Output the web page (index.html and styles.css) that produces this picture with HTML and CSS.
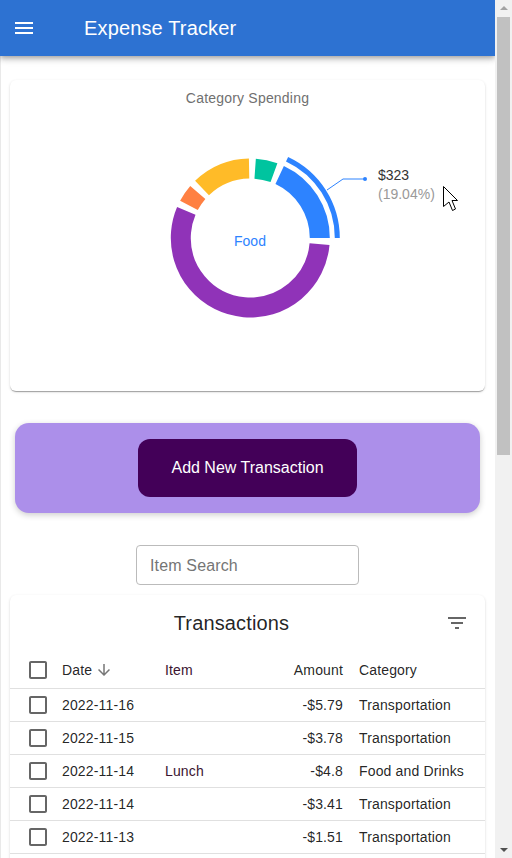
FILE: index.html
```html
<!DOCTYPE html>
<html lang="en">
<head>
    <meta charset="UTF-8">
    <meta name="viewport" content="width=device-width, initial-scale=1.0">
    <title>Expense Tracker</title>
    <link rel="stylesheet" href="styles.css">
</head>
<body>
<div class="window">
    <div class="page">
        <header class="appbar">
            <svg class="icon-menu" viewBox="0 0 24 24"><path d="M3 18h18v-2H3v2zm0-5h18v-2H3v2zm0-7v2h18V6H3z"/></svg>
            <h1>Expense Tracker</h1>
        </header>

        <main class="content">
            <section class="card chart-card">
                <h2>Category Spending</h2>
                <svg class="chart" viewBox="10 108 475 283">
                    <g fill="none" stroke-width="20">
                        <circle class="seg-food" cx="250.3" cy="238" r="69.5" pathLength="360" stroke-dasharray="65 295" transform="rotate(-65 250.3 238)"/>
                        <circle class="seg-green" cx="250.3" cy="238" r="69.5" pathLength="360" stroke-dasharray="16 344" transform="rotate(-86 250.3 238)"/>
                        <circle class="seg-yellow" cx="250.3" cy="238" r="69.5" pathLength="360" stroke-dasharray="43 317" transform="rotate(-134 250.3 238)"/>
                        <circle class="seg-orange" cx="250.3" cy="238" r="69.5" pathLength="360" stroke-dasharray="13 347" transform="rotate(-152 250.3 238)"/>
                        <circle class="seg-purple" cx="250.3" cy="238" r="69.5" pathLength="360" stroke-dasharray="198 162" transform="rotate(-355 250.3 238)"/>
                        <circle class="seg-food" cx="250.3" cy="238" r="87" stroke-width="5" pathLength="360" stroke-dasharray="65 295" transform="rotate(-65 250.3 238)"/>
                    </g>
                    <path class="leader" d="M327 190L343 179H365"/>
                    <circle class="leader-dot" cx="365" cy="179" r="2"/>
                    <text class="label-center" x="250" y="246">Food</text>
                    <text class="label-value" x="378" y="180">$323</text>
                    <text class="label-pct" x="378" y="199">(19.04%)</text>
                </svg>
            </section>

            <div class="add-panel">
                <button class="add-btn" type="button">Add New Transaction</button>
            </div>

            <div class="search-row">
                <input class="search" type="text" placeholder="Item Search">
            </div>

            <section class="card table-card">
                <div class="table-title">
                    <h2>Transactions</h2>
                    <svg class="icon-filter" viewBox="0 0 24 24"><path d="M10 18h4v-2h-4v2zM3 6v2h18V6H3zm3 7h12v-2H6v2z"/></svg>
                </div>
                <table>
                    <colgroup>
                        <col class="col-check"><col class="col-date"><col class="col-item"><col class="col-amount"><col class="col-cat">
                    </colgroup>
                    <thead>
                        <tr>
                            <th><svg class="check" viewBox="0 0 24 24"><path d="M19 5v14H5V5h14m0-2H5c-1.1 0-2 .9-2 2v14c0 1.1.9 2 2 2h14c1.1 0 2-.9 2-2V5c0-1.1-.9-2-2-2z"/></svg></th>
                            <th><span class="sort">Date <svg class="icon-sort" viewBox="0 0 24 24"><path d="M20 12l-1.41-1.41L13 16.17V4h-2v12.17l-5.58-5.59L4 12l8 8 8-8z"/></svg></span></th>
                            <th class="item">Item</th>
                            <th class="num">Amount</th>
                            <th>Category</th>
                        </tr>
                    </thead>
                    <tbody>
                        <tr>
                            <td><svg class="check" viewBox="0 0 24 24"><path d="M19 5v14H5V5h14m0-2H5c-1.1 0-2 .9-2 2v14c0 1.1.9 2 2 2h14c1.1 0 2-.9 2-2V5c0-1.1-.9-2-2-2z"/></svg></td>
                            <td>2022-11-16</td><td class="item"></td><td class="num">-$5.79</td><td>Transportation</td>
                        </tr>
                        <tr>
                            <td><svg class="check" viewBox="0 0 24 24"><path d="M19 5v14H5V5h14m0-2H5c-1.1 0-2 .9-2 2v14c0 1.1.9 2 2 2h14c1.1 0 2-.9 2-2V5c0-1.1-.9-2-2-2z"/></svg></td>
                            <td>2022-11-15</td><td class="item"></td><td class="num">-$3.78</td><td>Transportation</td>
                        </tr>
                        <tr>
                            <td><svg class="check" viewBox="0 0 24 24"><path d="M19 5v14H5V5h14m0-2H5c-1.1 0-2 .9-2 2v14c0 1.1.9 2 2 2h14c1.1 0 2-.9 2-2V5c0-1.1-.9-2-2-2z"/></svg></td>
                            <td>2022-11-14</td><td class="item">Lunch</td><td class="num">-$4.8</td><td>Food and Drinks</td>
                        </tr>
                        <tr>
                            <td><svg class="check" viewBox="0 0 24 24"><path d="M19 5v14H5V5h14m0-2H5c-1.1 0-2 .9-2 2v14c0 1.1.9 2 2 2h14c1.1 0 2-.9 2-2V5c0-1.1-.9-2-2-2z"/></svg></td>
                            <td>2022-11-14</td><td class="item"></td><td class="num">-$3.41</td><td>Transportation</td>
                        </tr>
                        <tr>
                            <td><svg class="check" viewBox="0 0 24 24"><path d="M19 5v14H5V5h14m0-2H5c-1.1 0-2 .9-2 2v14c0 1.1.9 2 2 2h14c1.1 0 2-.9 2-2V5c0-1.1-.9-2-2-2z"/></svg></td>
                            <td>2022-11-13</td><td class="item"></td><td class="num">-$1.51</td><td>Transportation</td>
                        </tr>
                    </tbody>
                </table>
            </section>
        </main>
    </div>

    <div class="scrollbar">
        <span class="arrow-up"></span>
        <div class="thumb"></div>
        <span class="arrow-down"></span>
    </div>
</div>

<!-- mouse pointer caught in the screenshot -->
<svg class="pointer" viewBox="0 0 18 28"><path d="M1.5 1.5L15.5 15.5H10L13.5 24L10.5 25.5L7 17L1.5 21.5Z"/></svg>
</body>
</html>
```

FILE: styles.css
```css
* {
    box-sizing: border-box;
}

html, body {
    margin: 0;
    height: 858px;
    overflow: hidden;
}

body {
    font-family: "Liberation Sans", Arial, sans-serif;
    color: rgba(0, 0, 0, .87);
    background: #fff;
}

.window {
    display: flex;
    height: 858px;
}

.page {
    width: 495px;
    height: 858px;
    overflow: hidden;
}

/* top bar */
.appbar {
    display: flex;
    align-items: center;
    height: 56px;
    padding-left: 12px;
    background: #2d72d2;
    color: #fff;
    box-shadow: 0 2px 4px -1px rgba(0, 0, 0, .2), 0 4px 5px 0 rgba(0, 0, 0, .14), 0 1px 10px 0 rgba(0, 0, 0, .12);
    position: relative;
}

.appbar h1 {
    margin: 0 0 0 48px;
    font-size: 20px;
    font-weight: 400;
    letter-spacing: .15px;
}

.icon-menu {
    width: 24px;
    height: 24px;
    fill: #fff;
}

.content {
    height: 802px;
    padding: 24px 10px 0 9px;
    border-left: 1px solid #e9e9e9;
}

.card {
    background: #fff;
    border-radius: 6px;
    box-shadow: 0 2px 1px -1px rgba(0, 0, 0, .2), 0 1px 1px 0 rgba(0, 0, 0, .14), 0 1px 3px 0 rgba(0, 0, 0, .12);
}

/* chart */
.chart-card {
    height: 311px;
    padding-top: 8px;
}

.chart-card h2 {
    margin: 0;
    height: 20px;
    line-height: 20px;
    font-size: 14px;
    font-weight: 400;
    text-align: center;
    letter-spacing: .2px;
    color: #707070;
}

.chart {
    display: block;
    width: 475px;
    height: 283px;
}

.seg-food { stroke: #2d83ff; }
.seg-green { stroke: #00c49f; }
.seg-yellow { stroke: #ffbb28; }
.seg-orange { stroke: #ff8042; }
.seg-purple { stroke: #9033b8; }

.leader {
    fill: none;
    stroke: #2d83ff;
}

.leader-dot {
    fill: #2d83ff;
}

.chart text {
    font-size: 14px;
}

.label-center {
    fill: #2d83ff;
    text-anchor: middle;
}

.label-value {
    fill: #333;
}

.label-pct {
    fill: #999;
}

/* add button */
.add-panel {
    display: flex;
    justify-content: center;
    align-items: center;
    height: 90px;
    margin: 32px 5px 0;
    border-radius: 14px;
    background: #ac8fea;
    box-shadow: 0 2px 6px rgba(0, 0, 0, .2);
}

.add-btn {
    width: 219px;
    height: 58px;
    border: none;
    border-radius: 12px;
    background: #430058;
    color: #fff;
    font-family: inherit;
    font-size: 16px;
}

/* search */
.search-row {
    display: flex;
    justify-content: center;
    margin-top: 32px;
}

.search {
    width: 223px;
    height: 40px;
    padding: 2px 13px 0;
    border: 1px solid #bbb;
    border-radius: 4px;
    outline: none;
    font-family: inherit;
    font-size: 16px;
    letter-spacing: .15px;
}

.search::placeholder {
    color: #757575;
    opacity: 1;
}

/* transactions */
.table-card {
    margin-top: 10px;
    padding-bottom: 20px;
}

.table-title {
    position: relative;
    display: flex;
    justify-content: center;
    align-items: center;
    height: 57px;
    padding-right: 32px;
}

.table-title h2 {
    margin: 0;
    font-size: 20px;
    font-weight: 400;
    letter-spacing: .15px;
}

.icon-filter {
    position: absolute;
    right: 16px;
    top: 16px;
    width: 24px;
    height: 24px;
    fill: #666;
}

table {
    width: 475px;
    table-layout: fixed;
    border-collapse: collapse;
    font-size: 14px;
}

.col-check { width: 44px; }
.col-date { width: 103px; }
.col-item { width: 90px; }
.col-amount { width: 104px; }
.col-cat { width: 134px; }

th, td {
    padding: 0 8px;
    border-bottom: 1px solid #e0e0e0;
    font-weight: 400;
    text-align: left;
    white-space: nowrap;
    letter-spacing: .15px;
}

thead tr {
    height: 36px;
}

tbody tr {
    height: 33px;
}

th:first-child, td:first-child {
    padding: 0 0 0 16px;
}

.item {
    color: #3b1430;
}

th.num, td.num {
    text-align: right;
}

.check {
    display: block;
    width: 24px;
    height: 24px;
    fill: #666;
}

.sort {
    display: inline-flex;
    align-items: center;
    gap: 3px;
}

.icon-sort {
    width: 18px;
    height: 18px;
    fill: #777;
}

/* fake scrollbar */
.scrollbar {
    display: flex;
    flex-direction: column;
    align-items: center;
    width: 17px;
    height: 858px;
    background: #f1f1f1;
}

.arrow-up, .arrow-down {
    display: block;
    flex: none;
    width: 0;
    height: 0;
    border-left: 4px solid transparent;
    border-right: 4px solid transparent;
}

.arrow-up {
    margin: 6px 0 7px;
    border-bottom: 4px solid #a3a3a3;
}

.arrow-down {
    margin: auto 0 6px;
    border-top: 4px solid #505050;
}

.thumb {
    width: 13px;
    height: 438px;
    background: #c1c1c1;
}

.pointer {
    position: absolute;
    left: 442px;
    top: 185px;
    width: 18px;
    height: 28px;
    fill: #fff;
    stroke: #000;
}
```
